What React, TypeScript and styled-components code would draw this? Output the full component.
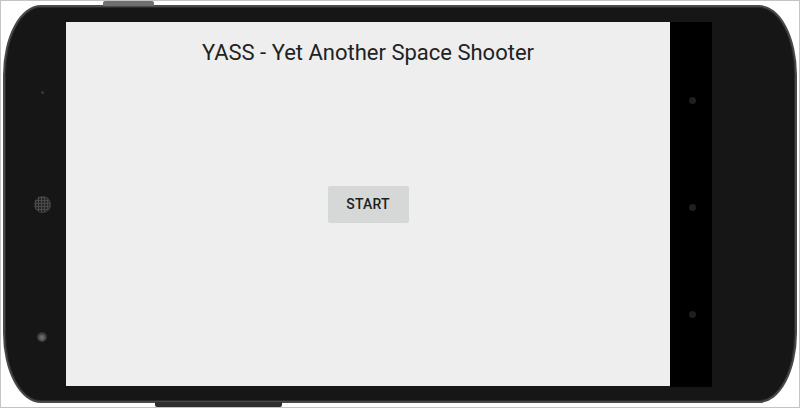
import React from "react";
import styled, { createGlobalStyle } from "styled-components";

const Global = createGlobalStyle`
  html, body { margin: 0; padding: 0; background: #ffffff; }
  body { font-family: Roboto, "Liberation Sans", sans-serif; }
`;

const Frame = styled.div`
  box-sizing: border-box;
  width: 800px;
  height: 408px;
  border: 1px solid #c4c4c4;
  padding: 4px 2px 4px 2px;
  display: flex;
  position: relative;
  overflow: hidden;
  background: #ffffff;
`;

const Phone = styled.div`
  box-sizing: border-box;
  flex: 1;
  display: flex;
  background: #161616;
  border: 2px solid #4a4a4a;
  border-radius: 38px / 70px;
  padding: 15px 0 14px 0;
  box-shadow: inset 0 0 0 1px #2a2a2a;
`;

const LeftBezel = styled.div`
  width: 61px;
  display: grid;
  grid-template-rows: 1fr auto 1fr;
  justify-items: center;
  padding-left: 13px;
  box-sizing: border-box;
`;

const Sensor = styled.div`
  align-self: center;
  width: 3px;
  height: 3px;
  border-radius: 50%;
  background: #3a3a3a;
  margin-top: -34px;
`;

const Speaker = styled.div`
  width: 17px;
  height: 17px;
  border-radius: 50%;
  background:
    radial-gradient(circle, #4a4a4a 0 1px, transparent 1.2px) 0 0 / 3px 3px,
    #262626;
  box-shadow: inset -2px 0 0 #3f3f3f;
`;

const Camera = styled.div`
  align-self: center;
  width: 10px;
  height: 10px;
  border-radius: 50%;
  background: radial-gradient(circle at 50% 55%, #6a6a6a 0 20%, #3a3a3a 55%, #232323 100%);
  margin-top: 74px;
`;

const Screen = styled.div`
  width: 604px;
  background: #eeeeee;
  display: grid;
  grid-template-rows: 1fr auto 1fr;
  justify-items: center;
  margin-bottom: 1px;
`;

const Title = styled.h1`
  margin: 17px 0 0 0;
  align-self: start;
  font-family: Roboto, "Liberation Sans", sans-serif;
  font-weight: 400;
  font-size: 22px;
  line-height: 28px;
  color: #222222;
  grid-row: 1;
`;

const StartButton = styled.button`
  grid-row: 2;
  width: 81px;
  height: 37px;
  border: none;
  border-radius: 2px;
  background: #d6d7d7;
  color: #1e1e1e;
  font-family: Roboto, "Liberation Sans", sans-serif;
  font-weight: 500;
  font-size: 14px;
  letter-spacing: 0.2px;
  padding: 0;
  cursor: pointer;
`;

const NavBar = styled.div`
  width: 42px;
  background: #000000;
  display: flex;
  flex-direction: column;
  align-items: center;
  justify-content: space-between;
  padding: 75px 0 69px 0;
  box-sizing: border-box;
`;

const NavDot = styled.div`
  width: 7px;
  height: 7px;
  border-radius: 50%;
  background: #1f1f1f;
  margin-left: 3px;
`;

const SideButton = styled.div<{ $left: number; $width: number; $bottom?: boolean; $color: string }>`
  position: absolute;
  left: ${(p) => p.$left}px;
  width: ${(p) => p.$width}px;
  height: 5px;
  ${(p) => (p.$bottom ? "bottom: 0;" : "top: 0;")}
  background: ${(p) => p.$color};
  border-radius: ${(p) => (p.$bottom ? "0 0 2px 2px" : "2px 2px 0 0")};
`;

export default function App() {
  return (
    <>
      <Global />
      <Frame>
        <SideButton $left={102} $width={51} $color="#6f6f6f" />
        <SideButton $left={154} $width={127} $bottom $color="#2e2e2e" />
        <Phone>
          <LeftBezel>
            <Sensor />
            <Speaker />
            <Camera />
          </LeftBezel>
          <Screen>
            <Title>YASS - Yet Another Space Shooter</Title>
            <StartButton>START</StartButton>
          </Screen>
          <NavBar>
            <NavDot />
            <NavDot />
            <NavDot />
          </NavBar>
        </Phone>
      </Frame>
    </>
  );
}
